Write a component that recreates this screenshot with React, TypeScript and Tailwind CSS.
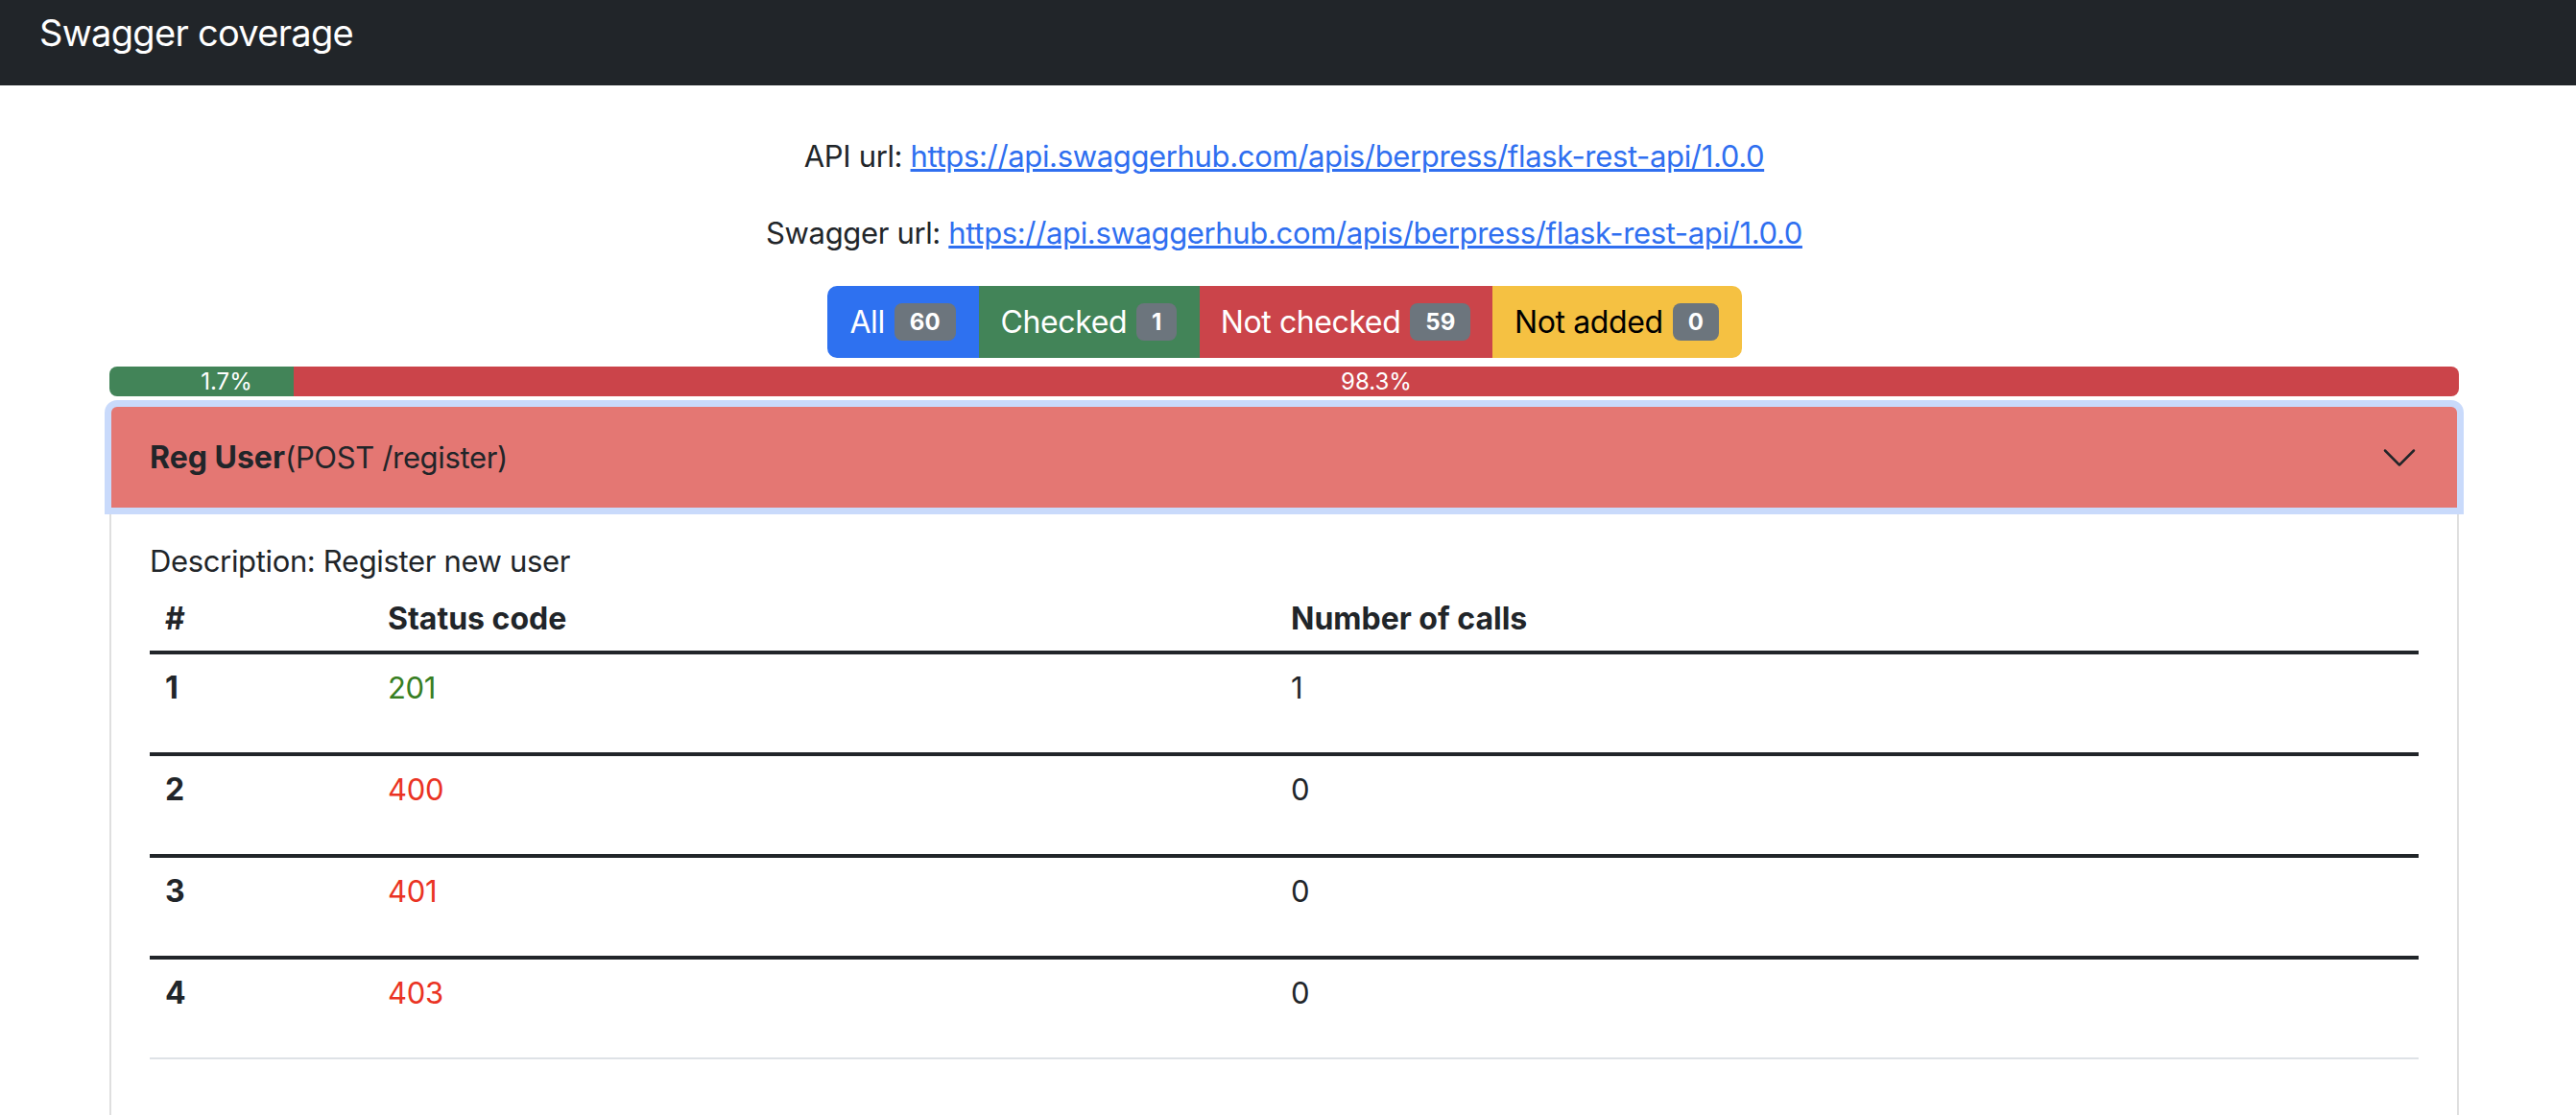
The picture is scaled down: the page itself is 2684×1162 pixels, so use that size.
import React from "react";

const rows = [
  { n: 1, code: "201", ok: true, calls: 1 },
  { n: 2, code: "400", ok: false, calls: 0 },
  { n: 3, code: "401", ok: false, calls: 0 },
  { n: 4, code: "403", ok: false, calls: 0 },
];

function Badge({ value }: { value: number }) {
  return (
    <span className="flex h-[39px] items-center rounded-[8px] bg-[#6c757d] px-[16px] text-[24px] font-bold leading-none tracking-normal text-white">
      {value}
    </span>
  );
}

export default function App() {
  const url = "https://api.swaggerhub.com/apis/berpress/flask-rest-api/1.0.0";

  return (
    <div className="min-h-screen bg-white font-['Inter',sans-serif] text-[31px] tracking-[-0.35px] text-[#212529]">
      <nav className="h-[89px] bg-[#212529] pl-[41px]">
        <span className="block pt-[4px] text-[38px] leading-[60px] tracking-[-0.7px] text-white">
          Swagger coverage
        </span>
      </nav>

      <main className="ml-[114px] w-[2448px]">
        <p className="mt-[50px] mb-[32px] text-center leading-[48px]">
          API url:{" "}
          <a href="#" className="text-[#2f6ff0] underline">
            {url}
          </a>
        </p>
        <p className="mb-[31px] text-center leading-[48px]">
          Swagger url:{" "}
          <a href="#" className="text-[#2f6ff0] underline">
            {url}
          </a>
        </p>

        {/* filter buttons */}
        <div className="flex justify-center">
          <div className="flex h-[75px] overflow-hidden rounded-[10px] text-[32px] tracking-[-0.4px]">
            <button className="flex w-[158px] items-center justify-center gap-[10px] bg-[#2e71f0] text-white">
              All <Badge value={60} />
            </button>
            <button className="flex w-[230px] items-center justify-center gap-[10px] bg-[#428458] text-white">
              Checked <Badge value={1} />
            </button>
            <button className="flex w-[305px] items-center justify-center gap-[10px] bg-[#cb444a] text-white">
              Not checked <Badge value={59} />
            </button>
            <button className="flex w-[260px] items-center justify-center gap-[10px] bg-[#f5c142] text-black">
              Not added <Badge value={0} />
            </button>
          </div>
        </div>

        {/* coverage bar */}
        <div className="mt-[9px] flex h-[31px] overflow-hidden rounded-[8px] text-[24px] leading-[31px] tracking-normal text-white">
          <div className="flex w-[192px] justify-center bg-[#428458] pl-[52px]">1.7%</div>
          <div className="flex flex-1 justify-center bg-[#cb444a]">98.3%</div>
        </div>

        {/* accordion */}
        <div className="mt-[9px] min-h-[740px] rounded-t-[8px] border-2 border-b-0 border-[#dfdfdf]">
          <button className="relative flex h-[105px] w-full items-center justify-between rounded-t-[6px] bg-[#e47773] px-[40px] text-left shadow-[0_0_0_7px_#c9dafb]">
            <span>
              <b className="text-[32px] tracking-normal">Reg User</b>(POST /register)
            </span>
            <svg width="40" height="40" viewBox="0 0 16 16" fill="#212529">
              <path
                fillRule="evenodd"
                d="M1.646 4.646a.5.5 0 0 1 .708 0L8 10.293l5.646-5.647a.5.5 0 0 1 .708.708l-6 6a.5.5 0 0 1-.708 0l-6-6a.5.5 0 0 1 0-.708z"
              />
            </svg>
          </button>

          <div className="px-[40px] pt-[32px]">
            <p className="leading-[48px]">Description: Register new user</p>

            <div className="mt-[4px] leading-[48px]">
              <div className="grid h-[65px] grid-cols-[232px_941px_1fr] pt-[8px] text-[32px] font-bold tracking-normal">
                <span className="px-[16px]">#</span>
                <span className="px-[16px]">Status code</span>
                <span className="px-[16px]">Number of calls</span>
              </div>
              {rows.map((r) => (
                <div
                  key={r.n}
                  className="grid h-[106px] grid-cols-[232px_941px_1fr] border-t-4 border-[#212529] pt-[11px]"
                >
                  <span className="px-[16px] text-[32px] font-bold tracking-normal">{r.n}</span>
                  <span className={r.ok ? "px-[16px] text-[#377e22]" : "px-[16px] text-[#ea3323]"}>
                    {r.code}
                  </span>
                  <span className="px-[16px]">{r.calls}</span>
                </div>
              ))}
              <div className="border-t-2 border-[#dee2e6]" />
            </div>
          </div>
        </div>
      </main>
    </div>
  );
}
